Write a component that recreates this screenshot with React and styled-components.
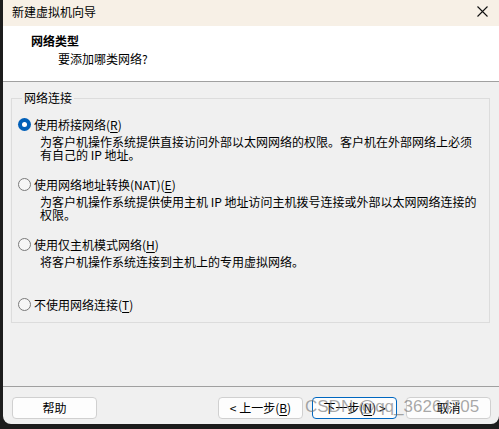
import React from "react";
import styled, { createGlobalStyle } from "styled-components";

const GlobalStyle = createGlobalStyle`
  html, body {
    margin: 0;
    padding: 0;
    background: #1c1c1c;
  }
  body {
    font-family: "Noto Sans CJK SC", "Liberation Sans", sans-serif;
    font-size: 12px;
    color: #000;
  }
`;

// STYLED
const Window = styled.div`
  position: relative;
  margin-left: 3px;
  width: 496px;
  height: 424px;
  display: flex;
  flex-direction: column;
  background: #f0f0f0;
  border-bottom-left-radius: 8px;
  border-bottom-right-radius: 8px;
  overflow: hidden;
`;

const TitleBar = styled.div`
  height: 26px;
  flex: none;
  display: flex;
  align-items: center;
  justify-content: space-between;
  padding: 0 9px 3px 9px;
  box-sizing: border-box;
  background: #f7f0e6;
  font-size: 12px;
`;

const Header = styled.div`
  height: 56px;
  flex: none;
  box-sizing: border-box;
  padding: 8px 0 0 28px;
  background: #fff;
  border-bottom: 1px solid #a0a0a0;
  line-height: 14px;
`;

const HeaderTitle = styled.div`
  font-weight: 700;
  font-size: 12px;
`;

const HeaderSub = styled.div`
  margin: 4px 0 0 27px;
`;

const Body = styled.div`
  flex: 1;
  padding: 9px 9px 0 8px;
`;

const Group = styled.fieldset`
  margin: 0;
  padding: 11px 6px 10px 6px;
  border: 1px solid #dcdcdc;
  display: flex;
  flex-direction: column;
  gap: 15px;
`;

const Legend = styled.legend`
  margin-left: 4px;
  padding: 0 2px;
  line-height: 14px;
`;

const Option = styled.div`
  display: flex;
  flex-direction: column;
`;

const OptionRow = styled.div`
  display: flex;
  align-items: center;
  gap: 3px;
  height: 16px;
`;

const Radio = styled.span`
  width: 13px;
  height: 13px;
  box-sizing: border-box;
  border-radius: 50%;
  flex: none;
  display: flex;
  align-items: center;
  justify-content: center;
  border: ${(p) => (p.$checked ? "none" : "1px solid #7a7a7a")};
  background: ${(p) => (p.$checked ? "#005fb8" : "#f6f6f6")};

  &::after {
    content: "";
    display: ${(p) => (p.$checked ? "block" : "none")};
    width: 5px;
    height: 5px;
    border-radius: 50%;
    background: #fff;
  }
`;

const Desc = styled.div`
  margin: 3px 0 0 22px;
  line-height: 13px;
  min-height: ${(p) => (p.$lines || 1) * 13}px;
`;

const Key = styled.span`
  text-decoration: underline;
  text-underline-offset: 2px;
`;

const Footer = styled.div`
  height: 38px;
  flex: none;
  box-sizing: border-box;
  border-top: 1px solid #a0a0a0;
  display: flex;
  align-items: flex-start;
  justify-content: space-between;
  padding: 10px 8px 0 9px;
`;

const ButtonGroup = styled.div`
  display: flex;
  gap: 9px;
`;

const Button = styled.button`
  width: 85px;
  height: 22px;
  box-sizing: border-box;
  padding: 0;
  font-family: inherit;
  font-size: 12px;
  color: #000;
  background: #fdfdfd;
  border: 1px solid ${(p) => (p.$primary ? "#0067c0" : "#d0d0d0")};
  border-radius: 4px;
  line-height: 18px;
`;

const Watermark = styled.div`
  position: absolute;
  left: 302px;
  top: 397px;
  font-family: "Liberation Sans", Arial, sans-serif;
  font-size: 17px;
  line-height: 20px;
  color: rgba(110, 110, 110, 0.6);
  pointer-events: none;
  white-space: nowrap;
`;

const CloseIcon = () => (
  <svg width="11" height="11" viewBox="0 0 11 11" style={{ marginRight: 2 }}>
    <path d="M0.5 0.5 L10.5 10.5 M10.5 0.5 L0.5 10.5" stroke="#111" strokeWidth="1.1" />
  </svg>
);

const options = [
  {
    label: "使用桥接网络",
    key: "R",
    checked: true,
    lines: 2,
    desc: (
      <>
        为客户机操作系统提供直接访问外部以太网网络的权限。客户机在外部网络上必须
        <br />
        有自己的 IP 地址。
      </>
    ),
  },
  {
    label: "使用网络地址转换(NAT)",
    key: "E",
    lines: 2,
    desc: (
      <>
        为客户机操作系统提供使用主机 IP 地址访问主机拨号连接或外部以太网网络连接的
        <br />
        权限。
      </>
    ),
  },
  {
    label: "使用仅主机模式网络",
    key: "H",
    lines: 2,
    desc: <>将客户机操作系统连接到主机上的专用虚拟网络。</>,
  },
  { label: "不使用网络连接", key: "T" },
];

export default function App() {
  return (
    <>
      <GlobalStyle />
      <Window>
        <TitleBar>
          <span>新建虚拟机向导</span>
          <CloseIcon />
        </TitleBar>
        <Header>
          <HeaderTitle>网络类型</HeaderTitle>
          <HeaderSub>要添加哪类网络?</HeaderSub>
        </Header>
        <Body>
          <Group>
            <Legend>网络连接</Legend>
            {options.map((o) => (
              <Option key={o.key}>
                <OptionRow>
                  <Radio $checked={o.checked} />
                  <span>
                    {o.label}(<Key>{o.key}</Key>)
                  </span>
                </OptionRow>
                {o.desc && <Desc $lines={o.lines}>{o.desc}</Desc>}
              </Option>
            ))}
          </Group>
        </Body>
        <Footer>
          <Button>帮助</Button>
          <ButtonGroup>
            <Button>
              &lt; 上一步(<Key>B</Key>)
            </Button>
            <Button $primary>
              下一步(<Key>N</Key>) &gt;
            </Button>
            <Button>取消</Button>
          </ButtonGroup>
        </Footer>
        <Watermark>CSDN @qq_36264705</Watermark>
      </Window>
    </>
  );
}
